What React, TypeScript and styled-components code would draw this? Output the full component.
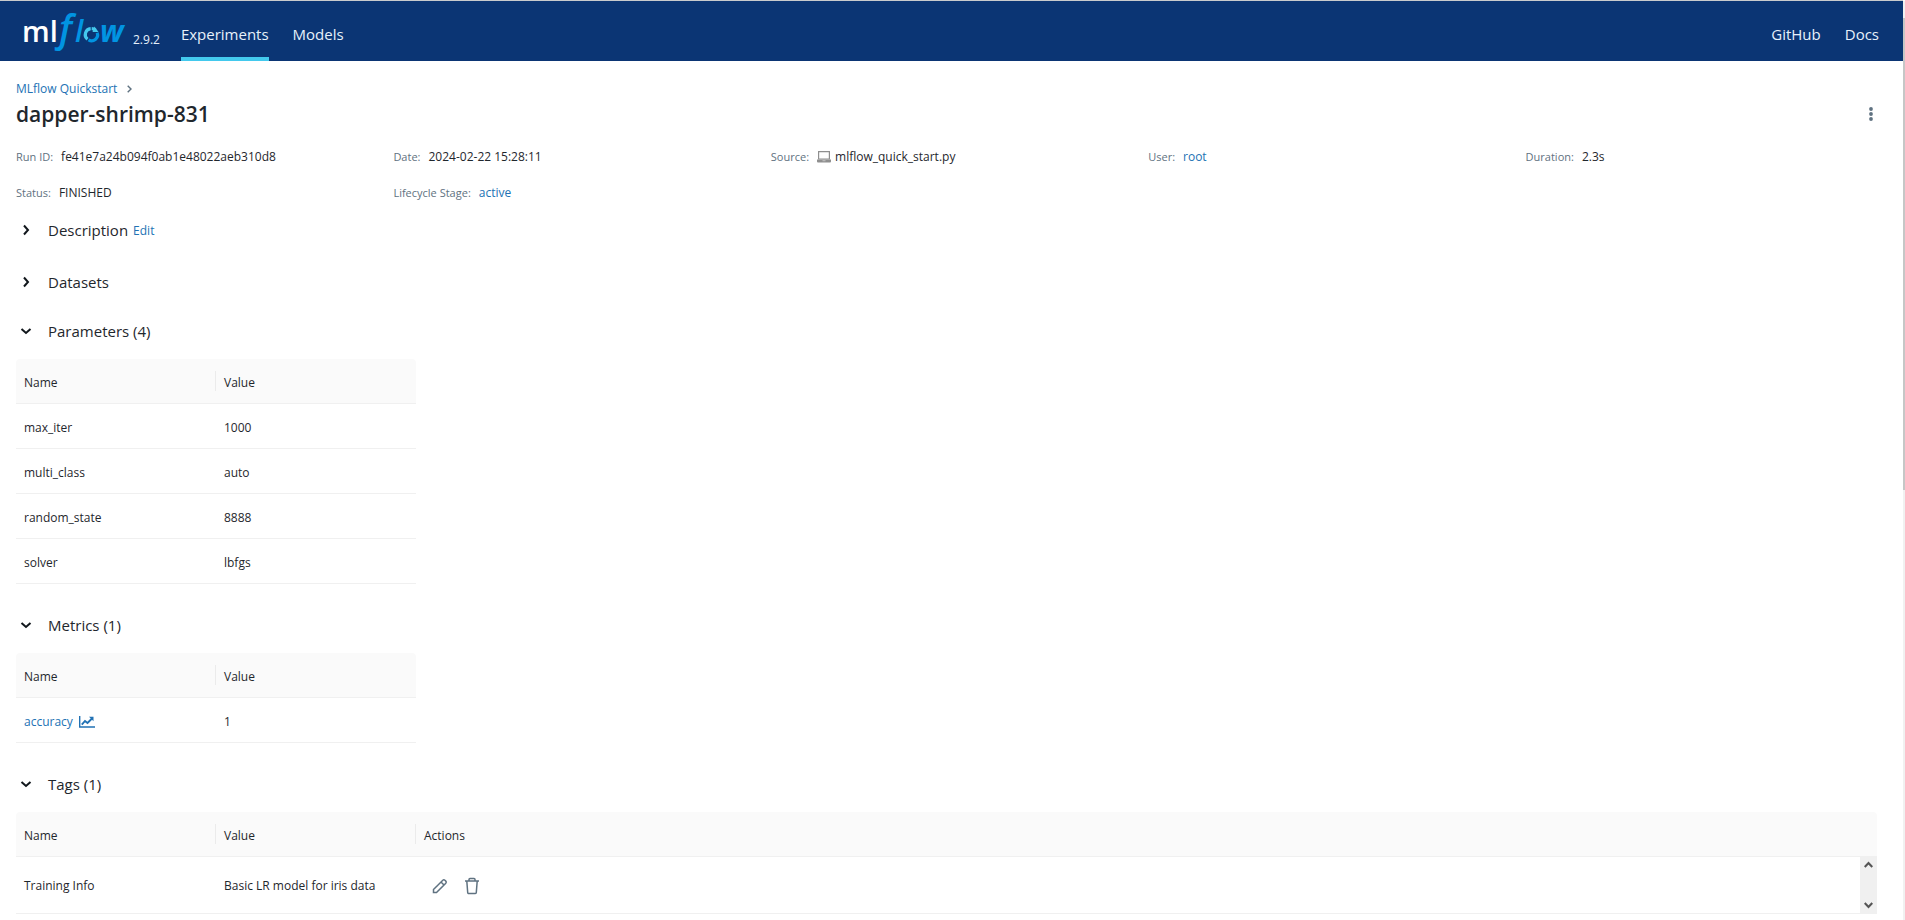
import React from "react";
import styled, { createGlobalStyle } from "styled-components";

const GlobalStyle = createGlobalStyle`
  *, *::before, *::after { box-sizing: border-box; }
  body {
    margin: 0;
    background: #fff;
    color: #1f272d;
    font-family: "Open Sans", "Noto Sans", sans-serif;
    font-size: 12px;
    line-height: 20px;
  }
  a { color: #2272b4; text-decoration: none; }
  button {
    border: 0;
    padding: 0;
    background: none;
    color: inherit;
    font: inherit;
    cursor: pointer;
  }
  svg { display: block; flex: none; }
`;

const Page = styled.div`
  min-height: 100vh;
  padding-right: 2px;
`;

const Header = styled.header`
  display: flex;
  align-items: stretch;
  height: 61px;
  padding: 0 24px 0 20px;
  border-top: 1px solid #c9cbcd;
  background: #0b3574;
`;

const Brand = styled.a`
  display: flex;
  align-items: flex-start;
`;

const Version = styled.span`
  padding: 29px 0 0 5px;
  color: #e7f1fb;
  font-size: 12px;
`;

const Nav = styled.nav<{ $end?: boolean }>`
  display: flex;
  gap: 24px;
  margin-left: ${(p) => (p.$end ? "auto" : "21px")};
`;

const NavLink = styled.a<{ $active?: boolean }>`
  display: flex;
  align-items: center;
  padding-top: 10px;
  border-bottom: 4px solid ${(p) => (p.$active ? "#43c9ed" : "transparent")};
  color: #e7f1fb;
  font-size: 15px;
`;

const Main = styled.main`
  padding: 18px 0 0 16px;
`;

const Breadcrumb = styled.nav`
  display: flex;
  align-items: center;
  gap: 10px;
  height: 20px;
`;

const TitleRow = styled.div`
  display: flex;
  align-items: center;
  justify-content: space-between;
  height: 30px;
  padding-right: 24px;
`;

const Title = styled.h1`
  margin: 0;
  font-size: 21px;
  font-weight: 600;
  line-height: 30px;
`;

const IconButton = styled.button`
  display: flex;
  align-items: center;
  justify-content: center;
  width: 16px;
  height: 24px;
  color: #5f7281;
`;

const MetaGrid = styled.dl`
  display: grid;
  grid-template-columns: repeat(5, 1fr);
  grid-auto-rows: 36px;
  margin: 10px 0 0;
`;

const MetaItem = styled.div`
  display: flex;
  align-items: center;
  gap: 8px;
`;

const MetaLabel = styled.dt`
  color: #5f7281;
  font-size: 11px;
`;

const MetaValue = styled.dd`
  display: flex;
  align-items: center;
  gap: 4px;
  margin: 0;
`;

const Collapsed = styled.section`
  display: flex;
  align-items: center;
  gap: 5px;
  margin-bottom: 17px;
`;

const Section = styled.section`
  margin-bottom: 25px;
`;

const SectionTitle = styled.h2`
  margin: 0;
  font-size: 15px;
  font-weight: 400;
`;

const SectionToggle = styled.button`
  display: flex;
  align-items: center;
  gap: 16px;
  height: 32px;
  padding-left: 4px;
`;

const EditButton = styled.button`
  height: 38px;
  padding-top: 2px;
  color: #2272b4;
`;

const TableFrame = styled.div<{ $wide?: boolean }>`
  position: relative;
  width: ${(p) => (p.$wide ? "auto" : "400px")};
  margin: 12px ${(p) => (p.$wide ? "26px" : "0")} 0 0;
`;

const Table = styled.table`
  width: 100%;
  border-collapse: separate;
  border-spacing: 0;
  table-layout: fixed;
`;

const HeadCell = styled.th<{ $fixed?: boolean }>`
  position: relative;
  width: ${(p) => (p.$fixed ? "200px" : "auto")};
  height: 45px;
  padding: 3px 8px 0;
  border-bottom: 1px solid #f0f0f0;
  background: #fafafa;
  font-weight: 400;
  text-align: left;

  &:first-child { border-top-left-radius: 4px; }
  &:last-child { border-top-right-radius: 4px; }
  &:not(:last-child)::after {
    content: "";
    position: absolute;
    top: 12px;
    right: 0;
    width: 1px;
    height: 20px;
    background: #ebebeb;
  }
`;

const Cell = styled.td<{ $tall?: boolean }>`
  height: ${(p) => (p.$tall ? "57px" : "45px")};
  padding: ${(p) => (p.$tall ? "1px" : "3px")} 8px 0;
  border-bottom: 1px solid #f0f0f0;
`;

const MetricLink = styled.a`
  display: flex;
  align-items: center;
  gap: 6px;
`;

const Actions = styled.div`
  display: flex;
  gap: 16px;
  padding-left: 8px;
`;

const BodyScroll = styled.div`
  position: absolute;
  right: 0;
  bottom: 0;
  display: flex;
  flex-direction: column;
  justify-content: space-between;
  align-items: center;
  width: 17px;
  height: 58px;
  padding: 5px 0;
  background: #f0f0f0;
`;

const PageScroll = styled.div`
  position: fixed;
  top: 1px;
  right: 0;
  width: 2px;
  height: 100%;
  padding-top: 17px;
  background: #f1f1f1;
`;

const PageScrollThumb = styled.div`
  height: 472px;
  max-height: 90%;
  background: #c6c6c6;
`;

const Logo = () => (
  <svg width="108" height="56" viewBox="0 0 108 56" role="img" aria-label="mlflow">
    <g fontFamily="Open Sans">
      <text x="2" y="41" fontSize="29" fontWeight="600" fill="#fff">ml</text>
      <g fill="#0194e2" fontStyle="italic" fontWeight="600">
        <text x="39" y="41" fontSize="38">f</text>
        <text x="55" y="41" fontSize="30">l</text>
        <text x="80" y="41" fontSize="30" fontWeight="700">w</text>
      </g>
    </g>
    <g fill="none" strokeWidth="3.2">
      <path d="M67.500 38.200A5.900 5.900 0 0 1 70.700 27.700" stroke="#43c9ed" />
      <path d="M71.700 27.600A5.900 5.900 0 0 1 75.500 29.200" stroke="#43c9ed" />
      <path d="M77.200 31.800A5.900 5.900 0 0 1 68.500 38.800" stroke="#0194e2" />
    </g>
    <path d="M74.500 25.500l4 5.500h-6z" fill="#43c9ed" />
  </svg>
);

const Chevron = ({ open }: { open?: boolean }) => (
  <svg width="12" height="12" viewBox="0 0 12 12" fill="none" stroke="#11171c" strokeWidth="2">
    <path d={open ? "M1.5 4L6 8l4.5-4" : "M4 1.5L8 6l-4 4.5"} />
  </svg>
);

const LaptopIcon = () => (
  <svg width="14" height="12" viewBox="0 0 14 12" fill="#8f8f8f">
    <path fillRule="evenodd" d="M1 0h12v8.500H1zM2.200 1.200v6.200h9.600V1.200z" />
    <path d="M0 8.500h14v2a1 1 0 0 1-1 1H1a1 1 0 0 1-1-1z" />
    <path d="M5.500 9.300h3v.9h-3z" fill="#ccc" />
  </svg>
);

const ChartIcon = () => (
  <svg width="16" height="12" viewBox="0 0 16 12" fill="none" stroke="#2272b4">
    <path d="M.7 0v11H16" strokeWidth="1.400" />
    <path d="M2.800 8.700L6 5l2.500 2L13 2.500" strokeWidth="1.900" />
    <path d="M10 .8h4.500v4.500z" fill="#2272b4" stroke="none" />
  </svg>
);

const PencilIcon = () => (
  <svg width="16" height="16" viewBox="0 0 16 16" fill="none" stroke="currentColor" strokeWidth="1.500">
    <path d="M1.500 14.500v-3l9.300-9.300a1.500 1.500 0 0 1 2.100 0l.9.9a1.500 1.500 0 0 1 0 2.100L4.500 14.500zM9 4l3 3" />
  </svg>
);

const TrashIcon = () => (
  <svg width="16" height="18" viewBox="0 0 16 18" fill="none" stroke="currentColor" strokeWidth="1.500">
    <path d="M1 4h14M5 4V2.500A1 1 0 0 1 6 1.500h4a1 1 0 0 1 1 1V4M2.800 4l.9 11.500a1 1 0 0 0 1 1h6.600a1 1 0 0 0 1-1L13.200 4" />
  </svg>
);

const KebabIcon = () => (
  <svg width="4" height="14" viewBox="0 0 4 14" fill="currentColor">
    <circle cx="2" cy="2" r="1.900" />
    <circle cx="2" cy="7" r="1.900" />
    <circle cx="2" cy="12" r="1.900" />
  </svg>
);

const ScrollArrow = ({ down }: { down?: boolean }) => (
  <svg width="9" height="7" viewBox="0 0 9 7" fill="none" stroke="#555" strokeWidth="2.200">
    <path d={down ? "M.7 1L4.500 5 8.300 1" : "M.7 6L4.500 2l3.800 4"} />
  </svg>
);

const Meta = ({ label, children }: { label: string; children: React.ReactNode }) => (
  <MetaItem>
    <MetaLabel>{label}:</MetaLabel>
    <MetaValue>{children}</MetaValue>
  </MetaItem>
);

const Toggle = ({ title, open }: { title: string; open?: boolean }) => (
  <SectionTitle>
    <SectionToggle type="button" aria-expanded={!!open}>
      <Chevron open={open} />
      {title}
    </SectionToggle>
  </SectionTitle>
);

type Row = { name: React.ReactNode; value: React.ReactNode; actions?: React.ReactNode };

const DataTable = ({ rows, wide }: { rows: Row[]; wide?: boolean }) => (
  <TableFrame $wide={wide}>
    <Table>
      <thead>
        <tr>
          <HeadCell $fixed scope="col">Name</HeadCell>
          <HeadCell $fixed scope="col">Value</HeadCell>
          {wide && <HeadCell scope="col">Actions</HeadCell>}
        </tr>
      </thead>
      <tbody>
        {rows.map((row, i) => (
          <tr key={i}>
            <Cell $tall={wide}>{row.name}</Cell>
            <Cell $tall={wide}>{row.value}</Cell>
            {wide && <Cell $tall>{row.actions}</Cell>}
          </tr>
        ))}
      </tbody>
    </Table>
    {wide && (
      <BodyScroll aria-hidden>
        <ScrollArrow />
        <ScrollArrow down />
      </BodyScroll>
    )}
  </TableFrame>
);

const parameters: Row[] = [
  { name: "max_iter", value: "1000" },
  { name: "multi_class", value: "auto" },
  { name: "random_state", value: "8888" },
  { name: "solver", value: "lbfgs" },
];

const metrics: Row[] = [
  {
    name: (
      <MetricLink href="#accuracy">
        accuracy
        <ChartIcon />
      </MetricLink>
    ),
    value: "1",
  },
];

const tags: Row[] = [
  {
    name: "Training Info",
    value: "Basic LR model for iris data",
    actions: (
      <Actions>
        <IconButton type="button" aria-label="Edit tag"><PencilIcon /></IconButton>
        <IconButton type="button" aria-label="Delete tag"><TrashIcon /></IconButton>
      </Actions>
    ),
  },
];

export default function App() {
  return (
    <Page>
      <GlobalStyle />
      <Header>
        <Brand href="#home">
          <Logo />
          <Version>2.9.2</Version>
        </Brand>
        <Nav aria-label="Main">
          <NavLink href="#experiments" $active>Experiments</NavLink>
          <NavLink href="#models">Models</NavLink>
        </Nav>
        <Nav $end aria-label="Resources">
          <NavLink href="#github">GitHub</NavLink>
          <NavLink href="#docs">Docs</NavLink>
        </Nav>
      </Header>
      <Main>
        <Breadcrumb aria-label="Breadcrumb">
          <a href="#quickstart">MLflow Quickstart</a>
          <svg width="5" height="8" viewBox="0 0 5 8" fill="none" stroke="#5f7281" strokeWidth="1.400">
            <path d="M.7.700L4 4 .7 7.300" />
          </svg>
        </Breadcrumb>
        <TitleRow>
          <Title>dapper-shrimp-831</Title>
          <IconButton type="button" aria-label="More actions"><KebabIcon /></IconButton>
        </TitleRow>
        <MetaGrid>
          <Meta label="Run ID">fe41e7a24b094f0ab1e48022aeb310d8</Meta>
          <Meta label="Date">2024-02-22 15:28:11</Meta>
          <Meta label="Source"><LaptopIcon />mlflow_quick_start.py</Meta>
          <Meta label="User"><a href="#root-user">root</a></Meta>
          <Meta label="Duration">2.3s</Meta>
          <Meta label="Status">FINISHED</Meta>
          <Meta label="Lifecycle Stage"><a href="#active">active</a></Meta>
        </MetaGrid>
        <Collapsed>
          <Toggle title="Description" />
          <EditButton type="button">Edit</EditButton>
        </Collapsed>
        <Collapsed>
          <Toggle title="Datasets" />
        </Collapsed>
        <Section>
          <Toggle title="Parameters (4)" open />
          <DataTable rows={parameters} />
        </Section>
        <Section>
          <Toggle title="Metrics (1)" open />
          <DataTable rows={metrics} />
        </Section>
        <section>
          <Toggle title="Tags (1)" open />
          <DataTable rows={tags} wide />
        </section>
      </Main>
      <PageScroll aria-hidden>
        <PageScrollThumb />
      </PageScroll>
    </Page>
  );
}
